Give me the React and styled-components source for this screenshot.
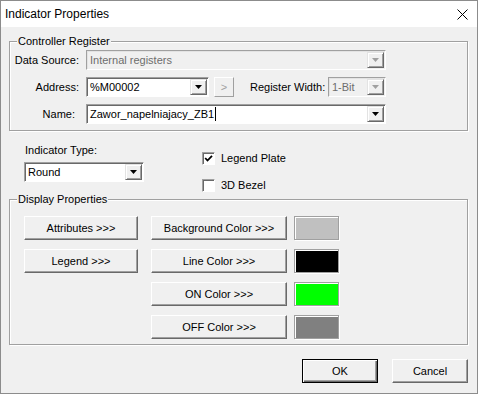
import React from 'react';
import styled, { createGlobalStyle } from 'styled-components';

const GlobalStyle = createGlobalStyle`
	html, body {
		margin: 0;
		padding: 0;
		background: #808080;
	}

	#root {
		width: 478px;
		height: 394px;
	}
`;

const Window = styled.div`
	width: 478px;
	height: 394px;
	box-sizing: border-box;
	border: 1px solid #8c8c8c;
	background: #f0f0f0;
	display: flex;
	flex-direction: column;
	overflow: hidden;
	font-family: 'Liberation Sans', Arial, sans-serif;
	font-size: 11px;
	line-height: 13px;
	color: #000;
`;

const TitleBar = styled.div`
	flex: none;
	height: 26px;
	background: #fff;
	display: flex;
	align-items: center;
	justify-content: space-between;
	padding: 0 9px 0 4px;
	font-size: 12px;
	line-height: 16px;
`;

const Body = styled.div`
	flex: 1;
	display: flex;
	flex-direction: column;
	padding: 0 9px 0 8px;
`;

const GroupBox = styled.div`
	position: relative;
	margin-top: ${p => p.$top}px;
	height: ${p => p.$height}px;
	box-sizing: border-box;
	border: 1px solid #a0a0a0;
	box-shadow: 1px 1px 0 #fff, inset 1px 1px 0 #fff;
	padding: ${p => p.$pad};
`;

const Legend = styled.span`
	position: absolute;
	top: -7px;
	left: 7px;
	padding: 0 1px;
	background: #f0f0f0;
	white-space: nowrap;
`;

const FormRow = styled.div`
	display: flex;
	align-items: center;
	height: 20px;

	& + & {
		margin-top: 7px;
	}
`;

const Label = styled.span`
	flex: none;
	width: ${p => p.$width || 69}px;
	box-sizing: border-box;
	text-align: ${p => p.$align || 'right'};
	padding-right: ${p => p.$inset || 0}px;
	margin-left: ${p => p.$left || 0}px;
	margin-right: ${p => p.$gap ?? 7}px;
	white-space: nowrap;
`;

const Combo = styled.div`
	flex: none;
	width: ${p => p.$width}px;
	height: 20px;
	box-sizing: border-box;
	display: flex;
	border: 1px solid;
	border-color: #a0a0a0 #fff #fff #a0a0a0;
	box-shadow: inset 1px 1px 0 ${p => (p.$disabled ? '#e3e3e3' : '#696969')};
	background: ${p => (p.$disabled ? '#f0f0f0' : '#fff')};
	padding: 1px 1px 1px 2px;
`;

const ComboText = styled.span`
	flex: 1;
	display: flex;
	align-items: center;
	padding-left: 1px;
	white-space: nowrap;
	overflow: hidden;
	color: ${p => (p.$disabled ? '#6d6d6d' : '#000')};
`;

const Caret = styled.i`
	display: inline-block;
	width: 1px;
	height: 14px;
	background: #000;
	margin-left: 1px;
`;

const DropButton = styled.span`
	flex: none;
	width: 17px;
	box-sizing: border-box;
	display: flex;
	align-items: center;
	justify-content: center;
	background: #f0f0f0;
	border: 1px solid;
	border-color: #e3e3e3 #696969 #696969 #e3e3e3;
	box-shadow: inset 1px 1px 0 #fff, inset -1px -1px 0 #a0a0a0;

	& svg {
		display: block;
	}
`;

const SmallButton = styled.span`
	flex: none;
	width: 20px;
	height: 20px;
	margin-left: 5px;
	box-sizing: border-box;
	display: flex;
	align-items: center;
	justify-content: center;
	color: #a0a0a0;
	border: 1px solid;
	border-color: #fff #a0a0a0 #a0a0a0 #fff;
`;

const TypeSection = styled.div`
	display: flex;
	align-items: flex-start;
	margin-top: 13px;
	padding-left: 15px;
`;

const TypeColumn = styled.div`
	display: flex;
	flex-direction: column;
	gap: 5px;

	& > span {
		padding-left: 1px;
	}
`;

const CheckColumn = styled.div`
	display: flex;
	flex-direction: column;
	gap: 14px;
	margin-left: 58px;
	padding-top: 8px;
`;

const CheckRow = styled.label`
	display: flex;
	align-items: center;
	gap: 6px;
	height: 13px;
`;

const CheckBox = styled.span`
	flex: none;
	width: 13px;
	height: 13px;
	box-sizing: border-box;
	border: 1px solid;
	border-color: #a0a0a0 #fff #fff #a0a0a0;
	box-shadow: inset 1px 1px 0 #696969;
	background: #fff;
	display: flex;
	align-items: center;
	justify-content: center;
`;

const ButtonGrid = styled.div`
	display: grid;
	grid-template-columns: 114px 136px 45px;
	grid-template-rows: repeat(4, 24px);
	column-gap: 13px;
	row-gap: 9px;
`;

const Button = styled.button`
	grid-column: ${p => p.$col || 'auto'};
	grid-row: ${p => p.$row || 'auto'};
	width: ${p => (p.$width ? `${p.$width}px` : 'auto')};
	height: 24px;
	box-sizing: border-box;
	margin: 0;
	padding: 0;
	font: inherit;
	color: #000;
	background: #f0f0f0;
	border: 1px solid;
	border-color: ${p => (p.$default ? '#000' : '#fff #696969 #696969 #fff')};
	box-shadow: ${p =>
		p.$default
			? 'inset 1px 1px 0 #fff, inset -1px -1px 0 #696969, inset -2px -2px 0 #a0a0a0'
			: 'inset -1px -1px 0 #a0a0a0'};
`;

const Swatch = styled.span`
	grid-column: 3;
	grid-row: ${p => p.$row};
	margin-left: -6px;
	width: 45px;
	height: 24px;
	box-sizing: border-box;
	border: 1px solid #a0a0a0;
	box-shadow: 1px 1px 0 #fff, inset 1px 1px 0 #fff;
	background: ${p => p.$color};
`;

const Footer = styled.div`
	display: flex;
	justify-content: flex-end;
	gap: 14px;
	margin-top: 14px;
`;

const Triangle = ({ color = '#000' }) => (
	<svg width="7" height="4" viewBox="0 0 7 4">
		<polygon points="0,0 7,0 3.5,4" fill={color} />
	</svg>
);

const ComboBox = ({ value, width, disabled, caret }) => (
	<Combo $width={width} $disabled={disabled}>
		<ComboText $disabled={disabled}>
			{value}
			{caret && <Caret />}
		</ComboText>
		<DropButton>
			<Triangle color={disabled ? '#a0a0a0' : '#000'} />
		</DropButton>
	</Combo>
);

const Check = ({ checked, children }) => (
	<CheckRow>
		<CheckBox>
			{checked && (
				<svg width="9" height="9" viewBox="0 0 9 9">
					<polyline points="1.2,4 3.5,6.5 8,1.8" fill="none" stroke="#000" strokeWidth="1.8" />
				</svg>
			)}
		</CheckBox>
		{children}
	</CheckRow>
);

export default function App() {
	return (
		<>
			<GlobalStyle />
			<Window>
				<TitleBar>
					<span>Indicator Properties</span>
					<svg width="11" height="11" viewBox="0 0 11 11">
						<path d="M0.5 0.5 L10.5 10.5 M10.5 0.5 L0.5 10.5" stroke="#000" strokeWidth="1" />
					</svg>
				</TitleBar>

				<Body>
					<GroupBox $top={14} $height={90} $pad="8px 0 0 0">
						<Legend>Controller Register</Legend>
						<FormRow>
							<Label>Data Source:</Label>
							<ComboBox value="Internal registers" width={300} disabled />
						</FormRow>
						<FormRow>
							<Label>Address:</Label>
							<ComboBox value="%M00002" width={123} />
							<SmallButton>&gt;</SmallButton>
							<Label $width={72} $align="left" $left={16} $gap={6}>
								Register Width:
							</Label>
							<ComboBox value="1-Bit" width={58} disabled />
						</FormRow>
						<FormRow>
							<Label $inset={4}>Name:</Label>
							<ComboBox value="Zawor_napelniajacy_ZB1" width={300} caret />
						</FormRow>
					</GroupBox>

					<TypeSection>
						<TypeColumn>
							<span>Indicator Type:</span>
							<ComboBox value="Round" width={120} />
						</TypeColumn>
						<CheckColumn>
							<Check checked>Legend Plate</Check>
							<Check>3D Bezel</Check>
						</CheckColumn>
					</TypeSection>

					<GroupBox $top={7} $height={146} $pad="16px 0 0 14px">
						<Legend>Display Properties</Legend>
						<ButtonGrid>
							<Button $col={1} $row={1}>Attributes &gt;&gt;&gt;</Button>
							<Button $col={1} $row={2}>Legend &gt;&gt;&gt;</Button>
							<Button $col={2} $row={1}>Background Color &gt;&gt;&gt;</Button>
							<Button $col={2} $row={2}>Line Color &gt;&gt;&gt;</Button>
							<Button $col={2} $row={3}>ON Color &gt;&gt;&gt;</Button>
							<Button $col={2} $row={4}>OFF Color &gt;&gt;&gt;</Button>
							<Swatch $row={1} $color="#c0c0c0" />
							<Swatch $row={2} $color="#000000" />
							<Swatch $row={3} $color="#00ff00" />
							<Swatch $row={4} $color="#808080" />
						</ButtonGrid>
					</GroupBox>

					<Footer>
						<Button $width={76} $default>OK</Button>
						<Button $width={76}>Cancel</Button>
					</Footer>
				</Body>
			</Window>
		</>
	);
}
